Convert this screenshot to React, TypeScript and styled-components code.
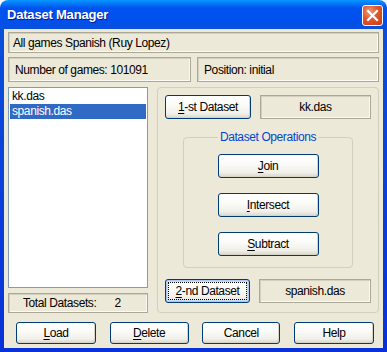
import React from "react";
import styled, { createGlobalStyle } from "styled-components";

const Global = createGlobalStyle`
  html, body { margin: 0; padding: 0; background: #ffffff; }
  * { box-sizing: border-box; }
`;

const FONT = `"Liberation Sans", Arial, sans-serif`;

const Window = styled.div`
  width: 387px;
  height: 352px;
  display: flex;
  flex-direction: column;
  padding: 0 4px 4px 4px;
  border-radius: 8px 8px 0 0;
  background: linear-gradient(180deg, #0997ff 0px, #0053ee 8px, #0050ee 20px, #0a4fd9 30px, #0831d9 100%);
  font-family: ${FONT};
  font-size: 12px;
  letter-spacing: -0.4px;
  color: #000;
`;

const TitleBar = styled.div`
  height: 29px;
  display: flex;
  align-items: center;
  justify-content: space-between;
  padding: 0 0 0 3px;
`;

const Title = styled.span`
  font-family: "Liberation Sans", Arial, sans-serif;
  font-weight: bold;
  font-size: 13px;
  color: #fff;
  text-shadow: 1px 1px 0 #0a1e8c;
  letter-spacing: -0.2px;
`;

const CloseButton = styled.div`
  width: 21px;
  height: 21px;
  margin-top: 1px;
  border: 1px solid #fff;
  border-radius: 3px;
  background: radial-gradient(circle at 35% 30%, #f09a7a 0%, #e0552a 45%, #c63d14 100%);
  display: flex;
  align-items: center;
  justify-content: center;
`;

const Body = styled.div`
  flex: 1;
  background: #ece9d8;
  padding: 3px 4px 0 4px;
  display: flex;
  flex-direction: column;
`;

const Sunken = styled.div<{ $h: number; $center?: boolean; $pad?: number }>`
  height: ${(p) => p.$h}px;
  border: 1px solid #aca899;
  box-shadow: inset 1px 1px 0 #d4d0c0, inset -1px -1px 0 #fbfaf6;
  background: #ece9d8;
  display: flex;
  align-items: center;
  justify-content: ${(p) => (p.$center ? "center" : "flex-start")};
  padding-left: ${(p) => p.$pad ?? 0}px;
  white-space: nowrap;
`;

const Row = styled.div<{ $mt: number; $gap: number }>`
  display: flex;
  margin-top: ${(p) => p.$mt}px;
  gap: ${(p) => p.$gap}px;
`;

const Main = styled.div`
  display: flex;
  margin-top: 5px;
  height: 226px;
`;

const LeftCol = styled.div`
  width: 140px;
  display: flex;
  flex-direction: column;
  gap: 5px;
`;

const ListBox = styled.div`
  height: 202px;
  background: #fff;
  border: 1px solid #7f9db9;
  padding: 1px;
  display: flex;
  flex-direction: column;
`;

const ListItem = styled.div<{ $selected?: boolean }>`
  height: 15px;
  line-height: 15px;
  padding-left: 2px;
  background: ${(p) => (p.$selected ? "#316ac5" : "transparent")};
  color: ${(p) => (p.$selected ? "#fff" : "#000")};
`;

const TotalValue = styled.span`
  margin-left: 18px;
`;

const GroupBox = styled.div`
  margin-left: 9px;
  width: 222px;
  border: 1px solid #d0d0bf;
  border-radius: 4px;
  padding: 7px 7px 0 7px;
  display: flex;
  flex-direction: column;
`;

const DatasetRow = styled.div<{ $mt?: number }>`
  display: flex;
  gap: 9px;
  margin-top: ${(p) => p.$mt ?? 0}px;
`;

const Button = styled.button<{ $w: number; $h?: number; $focus?: boolean }>`
  width: ${(p) => p.$w}px;
  height: ${(p) => p.$h ?? 24}px;
  flex: none;
  border: 1px solid #003c74;
  border-radius: 3px;
  background: linear-gradient(180deg, #ffffff 0%, #fbfbf8 40%, #f0efe8 80%, #d8d6cc 100%);
  font-family: ${FONT};
  font-size: 12px;
  letter-spacing: -0.4px;
  color: #000;
  padding: 0;
  display: flex;
  align-items: center;
  justify-content: center;
  box-shadow: ${(p) =>
    p.$focus
      ? "inset 0 0 0 1px #b0c8f0, inset 0 0 0 2px #cddcf6"
      : "inset -1px -1px 0 #d6d3c7"};
  outline: ${(p) => (p.$focus ? "1px dotted #000" : "none")};
  outline-offset: -4px;
`;

const Key = styled.span`
  text-decoration: underline;
  text-underline-offset: 2px;
`;

const OpsGroup = styled.fieldset`
  margin: 11px 18px 0 18px;
  height: 138px;
  border: 1px solid #d0d0bf;
  border-radius: 4px;
  padding: 4px 0 0 0;
  display: flex;
  flex-direction: column;
  align-items: center;
`;

const OpsLegend = styled.legend`
  color: #0046d5;
  padding: 0 2px;
  margin: 0 auto;
  font-size: 12px;
`;

const OpsButtons = styled.div`
  display: flex;
  flex-direction: column;
  align-items: center;
  gap: 15px;
  padding-top: 6px;
`;

const Footer = styled.div`
  display: flex;
  justify-content: space-between;
  padding: 0 5px 0 8px;
  margin-top: 9px;
`;

export default function App() {
  return (
    <>
      <Global />
      <Window>
        <TitleBar>
          <Title>Dataset Manager</Title>
          <CloseButton>
            <svg width="13" height="13" viewBox="0 0 13 13">
              <path d="M2 2 L11 11 M11 2 L2 11" stroke="#fff" strokeWidth="2.2" strokeLinecap="square" />
            </svg>
          </CloseButton>
        </TitleBar>
        <Body>
          <Sunken $h={21} $pad={4}>All games Spanish (Ruy Lopez)</Sunken>
          <Row $mt={4} $gap={6}>
            <Sunken $h={25} $pad={6} style={{ width: 183 }}>
              Number of games: 101091
            </Sunken>
            <Sunken $h={25} $pad={6} style={{ flex: 1 }}>
              Position: initial
            </Sunken>
          </Row>
          <Main>
            <LeftCol>
              <ListBox>
                <ListItem>kk.das</ListItem>
                <ListItem $selected>spanish.das</ListItem>
              </ListBox>
              <Sunken $h={20} $pad={14}>
                Total Datasets:<TotalValue>2</TotalValue>
              </Sunken>
            </LeftCol>
            <GroupBox>
              <DatasetRow>
                <Button $w={86}>
                  <Key>1</Key>-st Dataset
                </Button>
                <Sunken $h={24} $center style={{ width: 113 }}>
                  kk.das
                </Sunken>
              </DatasetRow>
              <OpsGroup>
                <OpsLegend>Dataset Operations</OpsLegend>
                <OpsButtons>
                  <Button $w={101}>
                    <Key>J</Key>oin
                  </Button>
                  <Button $w={101}>
                    <Key>I</Key>ntersect
                  </Button>
                  <Button $w={101}>
                    <Key>S</Key>ubtract
                  </Button>
                </OpsButtons>
              </OpsGroup>
              <DatasetRow $mt={11}>
                <Button $w={85} $focus>
                  <Key>2</Key>-nd Dataset
                </Button>
                <Sunken $h={24} $center style={{ width: 113 }}>
                  spanish.das
                </Sunken>
              </DatasetRow>
            </GroupBox>
          </Main>
          <Footer>
            <Button $w={80} $h={22}>
              <Key>L</Key>oad
            </Button>
            <Button $w={79} $h={22}>
              <Key>D</Key>elete
            </Button>
            <Button $w={78} $h={22}>Cancel</Button>
            <Button $w={80} $h={22}>Help</Button>
          </Footer>
        </Body>
      </Window>
    </>
  );
}
